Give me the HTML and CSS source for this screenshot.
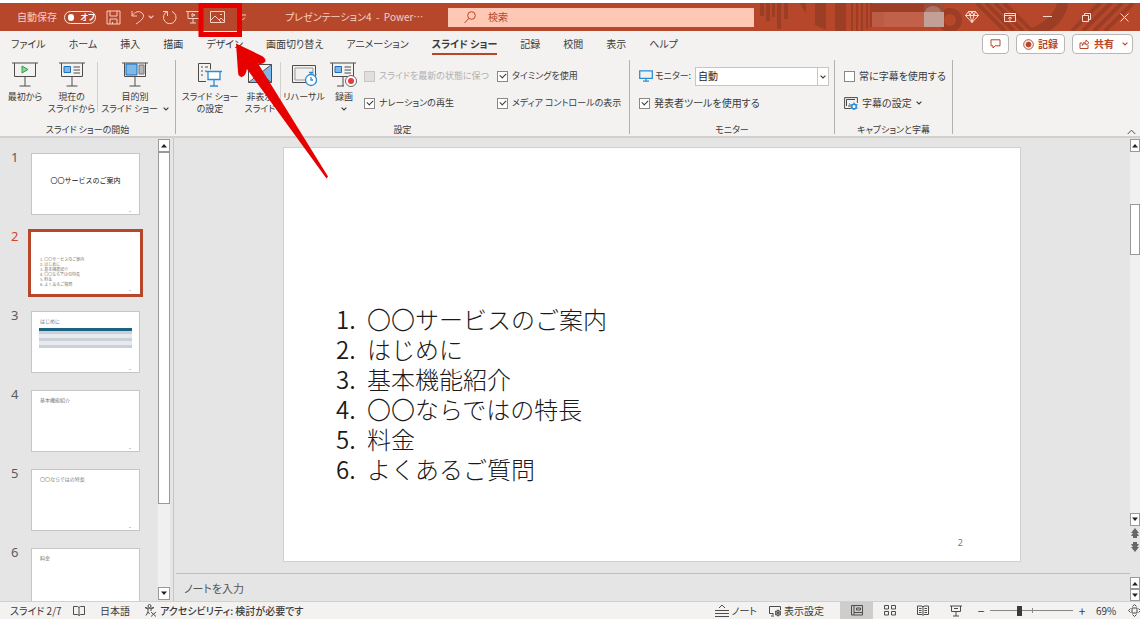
FILE: index.html
```html
<!DOCTYPE html>
<html lang="ja">
<head>
<meta charset="utf-8">
<title>プレゼンテーション4 - PowerPoint</title>
<link rel="stylesheet" href="styles.css">
</head>
<body>
<svg class="defs" width="0" height="0" aria-hidden="true">
  <symbol id="chev" viewBox="0 0 6 4"><path d="M.6.6 3 3 5.4.6" fill="none" stroke="currentColor" stroke-width="1.1"/></symbol>
  <symbol id="tri-up" viewBox="0 0 8 5"><path d="M1 4.500h6L4 1z" fill="currentColor"/></symbol>
  <symbol id="tri-down" viewBox="0 0 8 5"><path d="M1 .5h6L4 4z" fill="currentColor"/></symbol>
</svg>

<header class="titlebar">
  <svg class="pattern" viewBox="0 0 386 28" preserveAspectRatio="xMaxYMin slice" aria-hidden="true">
    <g fill="#9c3d26">
      <path d="M6 0h4v13H6zM12 0h4v18h-4zM18 0h3v14h-3zM23 0h4v26h-4zM30 0h4v16h-4zM46 0h6v11zM61 0h11v27l-11-5zM81 0h11v28H81zM97 0h2v28h-2zM102 0h2v28h-2zM107 0h2v28h-2zM112 0h2v26h-2zM116 0h2v24h-2z"/>
      <path d="M118 1h52v8h-52z"/>
    </g>
    <g fill="none" stroke="#9c3d26">
      <circle cx="196" cy="17" r="9" stroke-width="6"/>
      <path d="M223 0 251 28M232 0 260 28M241 0 269 28M250 0 278 28" stroke-width="4"/>
      <path d="M309-4Q308 18 280 30" stroke-width="11"/>
      <path d="M318 28 346 0M329 28 357 0M340 28 368 0M351 28 379 0" stroke-width="4"/>
    </g>
    <path fill="#bd5c45" d="M118 9h12v15h-12z"/><path fill="#c26149" d="M130 9h40v15h-40z"/><path fill="#9d4c38" d="M170 1h20v8h-20z"/><path fill="#c3a097" d="M170 9h20v15h-20z"/><path fill="#ab7162" d="M171 9a8 6 0 0 1 16 0z"/>
  </svg>
  <div class="quick">
    <label class="autosave">自動保存 <input type="checkbox" class="vh"><span class="toggle"><i></i>オフ</span></label>
    <button class="tb" aria-label="上書き保存"><svg width="15" height="15" viewBox="0 0 15 15"><path d="M1 1h13v13H1zM4 1v5h7V1M4 14V9h7v5M6.500 12v2"/></svg></button>
    <button class="tb" aria-label="元に戻す"><svg width="15" height="15" viewBox="0 0 15 15"><path d="M2 1v5h5M2 6C5 1.500 9 .5 12 3s2 6-6 11"/></svg></button>
    <svg class="c" width="6" height="4"><use href="#chev"/></svg>
    <button class="tb redo" aria-label="繰り返し"><svg width="15" height="15" viewBox="0 0 15 15"><path d="M1 1.500h4.500V6M5.500 1.500A6.300 6.300 0 1 0 10 1.500"/></svg></button>
    <button class="tb show" aria-label="最初から"><svg width="15" height="15" viewBox="0 0 15 15"><path d="M0 1.500h14M2 1.500v7h11M7 8.500V13M4 13h6M6 3.500v3l3-1.500z"/></svg></button>
    <button class="tb pic" aria-label="図"><svg width="15" height="13" viewBox="0 0 15 13"><path d="M.5.5h14v11H.5zM1 9l4-4 6 6M9 9l2-2 3 3M10 3.500h2"/></svg></button>
    <button class="tb cust" aria-label="クイック アクセス"><svg width="7" height="7" viewBox="0 0 7 7"><path d="M0 1h7M1 3.500 3.500 6 6 3.500"/></svg></button>
  </div>
  <div class="doc">プレゼンテーション4&nbsp; -&nbsp; Power⋯</div>
  <label class="search"><svg width="12" height="13" viewBox="0 0 12 13"><circle cx="7.500" cy="4.500" r="3.800"/><path d="M4.800 7.300.5 12"/></svg><input type="search" placeholder="検索" aria-label="検索"></label>
  <div class="wins">
    <button class="tb" aria-label="Premium"><svg width="14" height="12" viewBox="0 0 14 12"><path d="M3.500.5h7l3 4L7 11.500.5 4.500zM.5 4.500h13M3.500.5 5 4.500l2 7 2-7 1.500-4M5 4.500l2-4 2 4"/></svg></button>
    <button class="tb" aria-label="リボンの表示オプション"><svg width="12" height="9" viewBox="0 0 12 9"><path d="M.5.5h11v8H.5zM.5 2.500h11M6 8V4M4 5.500 6 4l2 1.500"/></svg></button>
    <button class="tb" aria-label="最小化"><svg width="10" height="9" viewBox="0 0 10 9"><path d="M0 3.500h9"/></svg></button>
    <button class="tb" aria-label="元に戻す (縮小)"><svg width="9" height="9" viewBox="0 0 9 9"><path d="M.5 2.500h6v6h-6zM2.500 2V.5h6v6H7"/></svg></button>
    <button class="tb" aria-label="閉じる"><svg width="9" height="9" viewBox="0 0 9 9"><path d="m.5.5 8 8M8.500.5l-8 8"/></svg></button>
  </div>
</header>

<nav class="tabs">
  <button>ファイル</button><button>ホーム</button><button>挿入</button><button>描画</button><button>デザイン</button><button>画面切り替え</button><button>アニメーション</button><button class="on">スライド ショー</button><button>記録</button><button>校閲</button><button>表示</button><button>ヘルプ</button>
  <div class="acts">
    <button class="act" aria-label="コメント"><svg width="13" height="10" viewBox="0 0 13 10"><path d="M2 .8h9v6H6L4 9V6.800H2z"/></svg></button>
    <button class="act"><svg width="11" height="11" viewBox="0 0 11 11"><circle cx="5.500" cy="5.500" r="4.800"/><circle class="f" cx="5.500" cy="5.500" r="2.500"/></svg>記録</button>
    <button class="act"><svg width="11" height="10" viewBox="0 0 11 10"><path d="M3 4H1v5.500h8V6M3 6.500Q3.500 3 7 2.800V1l3 2.700-3 2.500V4.500Q4.500 4.500 3 6.500"/></svg>共有<svg class="last" width="6" height="4"><use href="#chev"/></svg></button>
  </div>
</nav>

<section class="ribbon">
  <div class="group g1">
    <div class="tools">
      <button class="big"><svg width="26" height="25" viewBox="0 0 26 25"><path class="k" d="M0 1h26M2.500 1v13.500h21V1M13 14.500V24M7.500 24h11"/><path fill="#8fd19e" stroke="#2e9e4f" d="M10 4v7l6-3.500z"/></svg><span>最初から</span></button>
      <button class="big"><svg width="26" height="25" viewBox="0 0 26 25"><path class="k" d="M0 1h26M2.500 1v13.500h21V1M13 14.500V24M7.500 24h11M14.500 5H21M14.500 8H21M14.500 11H21"/><path fill="#7db8e8" stroke="#1d6fb8" d="M5 4.500h6.500v6H5z"/></svg><span>現在の</span><span>スライドから</span></button>
      <i class="sep"></i>
      <button class="big"><svg width="26" height="25" viewBox="0 0 26 25"><path fill="#7db8e8" stroke="#1d6fb8" d="M4 2h11v11H4z"/><path fill="#b5b5b5" stroke="#777" d="M17 3h5v9h-5z"/><path class="k" d="M0 1h26M2.500 1v13.500h21V1M13 14.500V24M7.500 24h11"/></svg><span>目的別</span><span>スライド ショー <svg width="6" height="4"><use href="#chev"/></svg></span></button>
    </div>
    <h2>スライド ショーの開始</h2>
  </div>
  <div class="group g2">
    <div class="tools">
      <button class="big"><svg width="26" height="25" viewBox="0 0 26 25"><path class="k" d="M9 19.500H1.500V1.500h12v6M4 5h2M8 5h3M4 9h2M4 13h2M8 9h1"/><path class="b" fill="#fff" d="M9 9.500h16M11 9.500v8h12v-8M17 17.500V24M13 24h8"/></svg><span>スライド ショー</span><span>の設定</span></button>
      <button class="big"><svg width="26" height="25" viewBox="0 0 26 25"><path fill="#7db8e8" d="M3 20 24 3v17z"/><path class="k" d="M1.500 2.500h23v18h-23zM1.500 20.500l23-18M1.500 2.500l23 18"/></svg><span>非表示</span><span>スライド</span></button>
      <i class="sep"></i>
      <button class="big"><svg width="26" height="25" viewBox="0 0 26 25"><path class="k" fill="#fff" d="M1.500 3.500h23v17h-23z"/><path stroke="#999" fill="none" d="M4 6h18v12H4z"/><circle class="b" fill="#fff" cx="20" cy="18" r="5.500"/><path class="b" fill="none" d="M20 12.500V11M18 10.500h4M20 15v3h2M24 13l1.500-1"/></svg><span>リハーサル</span></button>
      <button class="big"><svg width="28" height="25" viewBox="0 0 28 25"><path class="k" d="M0 1h26M2.500 1v13.500h21V1M13 14.500V24M7 24h7M14.500 5H21M14.500 8H21M14.500 11H21"/><path fill="#7db8e8" stroke="#1d6fb8" d="M5 4.500h6.500v6H5z"/><circle cx="21" cy="19" r="5.500" fill="#fff" stroke="#666"/><circle cx="21" cy="19" r="3" fill="#e8383d"/></svg><span>録画</span><span class="dd"><svg width="6" height="4"><use href="#chev"/></svg></span></button>
      <div class="checks">
        <label class="off"><input type="checkbox" disabled>スライドを最新の状態に保つ</label>
        <label><input type="checkbox" checked>タイミングを使用</label>
        <label><input type="checkbox" checked>ナレーションの再生</label>
        <label><input type="checkbox" checked>メディア コントロールの表示</label>
      </div>
    </div>
    <h2>設定</h2>
  </div>
  <div class="group g3">
    <div class="rows">
      <div class="row"><svg width="14" height="12" viewBox="0 0 14 12"><path class="b" fill="none" d="M.7.8h12.600v7.500H.7zM7 8.500V11M4 11.200h6"/></svg><label for="mon">モニター:</label><span class="sel"><select id="mon"><option>自動</option></select><svg width="6" height="4"><use href="#chev"/></svg></span></div>
      <label class="row"><input type="checkbox" checked>発表者ツールを使用する</label>
    </div>
    <h2>モニター</h2>
  </div>
  <div class="group g4">
    <div class="rows">
      <label class="row"><input type="checkbox">常に字幕を使用する</label>
      <button class="row"><svg width="14" height="13" viewBox="0 0 14 13"><path class="k" d="M7 11.500H.6V.6h12.800V6M2.500 2.500H11M2.500 2.500v6.500M4 9h3M5 7h1"/><circle cx="10" cy="9.500" r="2.300" fill="#fff" stroke="#2a8dd4" stroke-width="1.600"/><path class="b" d="M10 5.500v8M6.500 7.500l7 4M13.500 7.500l-7 4" stroke-dasharray="1.500 5"/></svg>字幕の設定<svg width="6" height="4"><use href="#chev"/></svg></button>
    </div>
    <h2>キャプションと字幕</h2>
  </div>
  <button class="fold" aria-label="リボンを折りたたむ"><svg width="9" height="6" viewBox="0 0 9 6"><path class="k" d="M.7 5 4.500 1.200 8.300 5"/></svg></button>
</section>

<main>
  <aside>
    <ol class="thumbs">
      <li><button class="thumb t1"><b>〇〇サービスのご案内</b></button></li>
      <li class="cur"><button class="thumb t2"><span>1. 〇〇サービスのご案内<br>2. はじめに<br>3. 基本機能紹介<br>4. 〇〇ならではの特長<br>5. 料金<br>6. よくあるご質問</span></button></li>
      <li><button class="thumb"><span>はじめに</span><i class="tbl"></i></button></li>
      <li><button class="thumb"><span>基本機能紹介</span></button></li>
      <li><button class="thumb"><span>〇〇ならではの特長</span></button></li>
      <li><button class="thumb"><span>料金</span></button></li>
    </ol>
    <div class="sb">
      <button aria-label="上へ"><svg width="8" height="5"><use href="#tri-up"/></svg></button>
      <div class="track"><i class="grip long"></i></div>
      <button aria-label="下へ"><svg width="8" height="5"><use href="#tri-down"/></svg></button>
    </div>
  </aside>
  <div class="editor">
    <div class="stage">
      <article class="slide">
        <ol>
          <li>〇〇サービスのご案内</li>
          <li>はじめに</li>
          <li>基本機能紹介</li>
          <li>〇〇ならではの特長</li>
          <li>料金</li>
          <li>よくあるご質問</li>
        </ol>
        <span class="num">2</span>
      </article>
    </div>
    <div class="sb">
      <button aria-label="上へ"><svg width="8" height="5"><use href="#tri-up"/></svg></button>
      <div class="track"><i class="grip short"></i></div>
      <button aria-label="下へ"><svg width="8" height="5"><use href="#tri-down"/></svg></button>
      <button class="page" aria-label="前のスライド"><svg width="8" height="10" viewBox="0 0 8 10"><path d="M4 0 8 5H6l2 3H6v2H2V8H0l2-3H0z"/></svg></button>
      <button class="page" aria-label="次のスライド"><svg width="8" height="10" viewBox="0 0 8 10"><path d="M4 10 8 5H6l2-3H6V0H2v2H0l2 3H0z"/></svg></button>
    </div>
    <div class="notes">ノートを入力</div>
    <div class="sb nsb">
      <button aria-label="上へ"><svg width="8" height="5"><use href="#tri-up"/></svg></button>
      <button aria-label="下へ"><svg width="8" height="5"><use href="#tri-down"/></svg></button>
    </div>
  </div>
</main>

<footer>
  <span class="pos">スライド 2/7</span>
  <button class="st" aria-label="校正"><svg width="12" height="12" viewBox="0 0 12 12"><path class="k" d="M6 10.500 4.500 9.500H.5v-8h4L6 2.500l1.500-1h4v8h-4zM6 2.500v8"/></svg></button>
  <span class="lang">日本語</span>
  <button class="st acc"><svg width="13" height="13" viewBox="0 0 13 13"><circle class="k" cx="5.500" cy="2" r="1.500"/><path class="k" d="M1 3.500 4 5v3l-2 3.500M10 3.500 7 5v2M1 3.500q4.500 2 9 0M4 8l1.500 2M7 8l5 4.500M12 8l-5 4.500"/></svg>アクセシビリティ: 検討が必要です</button>
  <div class="right">
    <button class="st"><svg width="14" height="13" viewBox="0 0 14 13"><path class="k" d="M0 6.500h14M0 9.500h14M0 12.500h14M4 4l3-3 3 3"/></svg>ノート</button>
    <button class="st disp"><svg width="13" height="12" viewBox="0 0 13 12"><path class="k" d="M5 9H3M4 8.500H.5v-7h11V5M2 11h3"/><circle class="k" cx="9" cy="8" r="2.500"/><path class="k" d="M9 4.500v7M6 6l6 4M12 6l-6 4"/></svg>表示設定</button>
    <button class="view on" aria-label="標準"><svg width="12" height="11" viewBox="0 0 12 11"><path class="k" d="M.5.5h11v9.500H.5zM3 .5V10M3 7.500h8M5.500 3h4v2h-4z"/></svg></button>
    <button class="view" aria-label="スライド一覧"><svg width="12" height="11" viewBox="0 0 12 11"><path class="k" d="M.5.500h4v3.500h-4zM7.500.5h4V4h-4zM.5 6.500h4V10h-4zM7.500 6.500h4V10h-4z"/></svg></button>
    <button class="view" aria-label="閲覧表示"><svg width="12" height="11" viewBox="0 0 12 11"><path class="k" d="M.5 1H5l1 1 1-1h4.500v8.500H7l-1 1-1-1H.5zM6 2v8M2 3.500h2.500M2 5.500h2.500M2 7.500h2.500M7.500 3.500H10M7.500 5.500H10M7.500 7.500H10"/></svg></button>
    <button class="view" aria-label="スライド ショー"><svg width="12" height="12" viewBox="0 0 12 12"><path class="k" d="M0 1h12M1.500 1v5.500h9V1M6 6.500V11M3 11h6M4 3.500h4"/></svg></button>
    <button class="pm" aria-label="縮小">−</button>
    <input type="range" min="0" max="100" value="34" aria-label="ズーム">
    <button class="pm" aria-label="拡大">+</button>
    <span class="pct">69%</span>
    <button class="st" aria-label="ウィンドウに合わせる"><svg width="13" height="13" viewBox="0 0 13 13"><path class="k" d="M4 4h5v5H4zM4.500 2.500l2-2 2 2M4.500 10.500l2 2 2-2M2.500 4.500l-2 2 2 2M10.500 4.500l2 2-2 2"/></svg></button>
  </div>
</footer>

<svg class="mark" width="332" height="182" viewBox="0 0 332 182" aria-hidden="true">
  <path d="M201 5.500h38.500v29H201z" fill="none" stroke="#e60000" stroke-width="5"/>
  <path d="M236 43.500 262 56Q267 59 265 62 262 65 258 63.500L328 176.500 326.500 178.500 247 69 245.500 74Q243 78 240 76.500 238 75.500 238 72Z" fill="#e60000"/>
</svg>
</body>
</html>
```
FILE: styles.css
```css
* { box-sizing: border-box; }
body {
  margin: 0;
  height: 100vh;
  display: flex;
  flex-direction: column;
  overflow: hidden;
  position: relative;
  font: 10px/14px "Noto Sans CJK JP", "Noto Sans", sans-serif;
  font-feature-settings: "palt";
  color: #3b3a39;
  background: #f3f2f1;
}
button, input, select { font: inherit; font-feature-settings: inherit; color: inherit; }
button { background: none; border: 0; padding: 0; white-space: nowrap; }
svg { display: block; flex: none; }
h2 { margin: 0; font-size: 9px; font-weight: 400; text-align: center; }
ol { margin: 0; padding: 0; list-style: none; }
.defs { position: absolute; }
.vh { position: absolute; opacity: 0; width: 1px; height: 1px; }
.k { fill: none; stroke: #4d4c4b; }
.b { stroke: #2a8dd4; stroke-width: 1.3; }

/* title bar */
.titlebar {
  flex: none;
  position: relative;
  display: flex;
  align-items: center;
  height: 31px;
  padding-left: 17px;
  border-top: 3px solid #fff;
  background: #b7472a;
  color: #f6cfc3;
}
.pattern { position: absolute; right: 0; top: 0; width: 386px; height: 28px; }
.tb svg, .search svg { fill: none; stroke: currentColor; stroke-width: 1; }
.quick { display: flex; align-items: center; width: 268px; flex: none; }
.autosave { display: flex; align-items: center; justify-content: space-between; width: 79px; margin-right: 10px; white-space: nowrap; }
.toggle {
  display: flex; align-items: center; gap: 6px;
  height: 13px; width: 32px; padding-left: 3px;
  border: 1px solid #fbe3dc; border-radius: 7px;
  font-size: 8px; font-weight: 700; color: #fff;
}
.toggle i { width: 7px; height: 7px; border-radius: 50%; background: #fff; }
.quick .tb { margin-right: 9px; }
.quick .c { margin: 0 8px 0 -6px; }
.quick .pic { margin-right: 14px; }
.doc { width: 163px; flex: none; white-space: nowrap; }
.search {
  flex: 0 1 306px;
  display: flex; align-items: center; gap: 12px;
  height: 19px; padding-left: 16px;
  background: #fec8b5; color: #b7472a;
}
.search input { border: 0; background: none; outline: 0; min-width: 0; flex: 1; padding: 0; appearance: none; }
.search input::placeholder { color: #b7472a; opacity: 1; }
.wins { position: relative; margin-left: auto; display: grid; grid-template-columns: repeat(5, 38px); justify-items: center; margin-right: -3px; color: #fbdcd2; }
.wins .tb { display: grid; place-items: center; }

/* tabs */
.tabs { flex: none; display: flex; align-items: center; gap: 23px; height: 29px; padding: 0 7px 1px 11px; }
.tabs > button { height: 20px; border-bottom: 2px solid transparent; }
.tabs > .on { border-color: #b7472a; font-weight: 700; }
.acts { margin-left: auto; display: flex; gap: 7px; padding-bottom: 2px; }
.act {
  display: flex; align-items: center; gap: 4px; height: 20px; padding: 0 6px;
  background: #fff; border: 1px solid #b9b7b5; border-radius: 4px;
  color: #b7472a; font-weight: 700;
}
.act svg { fill: none; stroke: #b7472a; }
.act .f { fill: #b7472a; }
.act .last { margin: 0 -2px 0 4px; }

/* ribbon */
.ribbon {
  flex: none; position: relative;
  display: grid; grid-template-columns: 176px 454px 205px 118px 1fr;
  height: 78px; border-bottom: 2px solid #d2d0ce;
  font-size: 9px;
}
.group { display: flex; flex-direction: column; height: 74px; border-right: 1px solid #b3b0ad; }
.tools { flex: 1; display: flex; align-items: flex-start; padding-top: 2px; }
.group h2 { height: 13px; line-height: 13px; margin-bottom: -2px; }
.big { display: flex; flex-direction: column; align-items: center; line-height: 12px; flex: none; }
.big > svg { margin-bottom: 4px; }
.big span { display: flex; align-items: center; gap: 3px; white-space: pre; }
.big .dd { height: 12px; }
.sep { width: 1px; height: 50px; background: #d2d0ce; }
.g1 .tools { display: grid; grid-template-columns: 42px 47px 1px 1fr; column-gap: 2px; padding: 2px 5px 0 4px; }
.g2 .tools { display: grid; grid-template-columns: 60px 36px 1px 42px 34px 1fr; column-gap: 2px; padding-left: 4px; }
.checks { display: grid; grid-template-columns: 133px 1fr; row-gap: 13px; padding: 7px 0 0 1px; }
.checks label, .row { display: flex; align-items: center; gap: 4px; white-space: nowrap; }
.off { color: #b1afad; }
input[type="checkbox"]:not(.vh) {
  appearance: none; flex: none; position: relative;
  width: 11px; height: 11px; margin: 0;
  background: #fff; border: 1px solid #8a8886;
}
.off input[type="checkbox"]:not(.vh) { background: #e1dfdd; border-color: #c8c6c4; }
input[type="checkbox"]:checked::after {
  content: ""; position: absolute; left: 2px; top: 1px; width: 5px; height: 3px;
  border: solid #3b3a39; border-width: 0 0 1px 1px; transform: rotate(-45deg);
}
.rows { flex: 1; display: flex; flex-direction: column; gap: 7px; padding: 6px 5px 0 9px; }
.row { height: 20px; }
.rows .row { font-size: 10px; }
.g3 .row:first-child { gap: 2px; font-size: 9px; }
.sel { position: relative; flex: 1; margin-left: 2px; font-size: 10px; }
.sel select {
  display: block; width: 100%; height: 19px; padding: 0 2px; appearance: none;
  background: #fff; border: 1px solid #c8c6c4; border-radius: 0; color: #201f1e;
}
.sel::after { content: ""; position: absolute; right: 11px; top: 0; width: 1px; height: 19px; background: #c8c6c4; }
.sel svg { position: absolute; right: 3px; top: 8px; }
.fold { align-self: end; justify-self: end; padding: 0 4px 1px; }

/* workspace */
main { flex: 1; min-height: 0; display: flex; background: #e5e5e5; }
aside { flex: none; display: flex; width: 174px; border-right: 1px solid #c6c6c6; }
.thumbs { flex: 1; overflow: hidden; display: flex; flex-direction: column; gap: 17px; padding: 15px 0 0 11px; counter-reset: s; }
.thumbs li { flex: none; display: flex; counter-increment: s; font: 13px/14px "Noto Sans", sans-serif; color: #5c5b5a; }
.thumbs li::before { content: counter(s); width: 20px; line-height: 9px; }
.thumbs .cur { color: #d24726; }
.thumb {
  position: relative; width: 109px; height: 62px; padding: 6px 8px; text-align: left;
  display: flex; flex-direction: column; background: #fff; border: 1px solid #c6c6c6;
  font: 5px/6px "Noto Sans CJK JP", sans-serif; color: #777;
}
.thumb::after { content: ""; position: absolute; right: 8px; bottom: 2px; width: 2px; height: 1px; background: #ccc; }
.cur .thumb { border-color: #fff; box-shadow: 0 0 0 3px #b7472a; }
.t1 { align-items: center; padding-top: 22px; }
.t1 b { font-size: 7px; line-height: 8px; font-weight: 400; color: #111; }
.t2 { padding-top: 24px; }
.t2 span { font-size: 4px; line-height: 5px; }
.tbl {
  height: 20px; margin: 4px 0 0 -1px; width: 93px;
  background: linear-gradient(#1b6282 3px, #cbd0d8 3px 6px, #e7eaee 6px 10px, #cbd0d8 10px 13px, #e7eaee 13px 17px, #cbd0d8 17px);
}
.sb { width: 12px; flex: none; display: flex; flex-direction: column; background: #f0f0f0; color: #222; }
.sb button { display: grid; place-items: center; height: 13px; flex: none; background: #fff; border: 1px solid #999; }
aside .sb { margin: 1px 3px 1px 0; }
.track { flex: 1; position: relative; display: flex; flex-direction: column; }
.grip { background: #fff; border: 1px solid #999; }
.long { height: 81%; }
.short { height: 51px; margin-top: 52px; }
.editor { flex: 1; min-width: 0; display: grid; grid-template: 1fr 28px / 1fr 10px; }
.editor .sb { width: 10px; margin-top: 1px; }
.editor .sb .page { border: 0; background: #e5e5e5; fill: #666; height: 14px; }
.editor > .sb:not(.nsb) { padding-bottom: 19px; background: linear-gradient(#f0f0f0 90%, #e5e5e5 90%); }
.stage { min-height: 0; display: flex; justify-content: center; align-items: flex-start; padding-top: 9px; }
.slide {
  display: flex; flex-direction: column; justify-content: space-between;
  width: 77.2%; aspect-ratio: 16 / 9; padding: 156px 57px 12px 52px;
  background: #fff; border: 1px solid #d0d0d0; color: #1a1a1a;
}
.slide ol { counter-reset: n; font-size: 24px; line-height: 30px; font-weight: 300; font-feature-settings: normal; }
.slide li { counter-increment: n; display: flex; }
.slide li::before { content: counter(n) "."; width: 31px; font-weight: 350; }
.num { align-self: flex-end; font: 9px/12px "Noto Sans", sans-serif; color: #777; }
.notes { display: flex; align-items: center; margin-left: 2px; padding-left: 8px; border-top: 1px solid #bdbdbd; font-size: 11px; color: #555; }
.editor .nsb { margin-top: 4px; }
.nsb button { height: 12px; }

/* status bar */
footer { flex: none; display: flex; align-items: center; height: 18px; padding-left: 10px; border-top: 1px solid #d2d0ce; white-space: nowrap; }
.pos { width: 63px; }
.st { display: flex; align-items: center; gap: 3px; }
.lang { margin: 0 14px 0 15px; }
.acc { font-weight: 500; }
.right { margin-left: auto; display: flex; align-items: center; height: 100%; margin-right: -1px; }
.disp { margin: 0 16px 0 12px; gap: 2px; }
.view { display: grid; place-items: center; width: 33px; height: 100%; }
.view.on { background: #cfcdcb; }
.pm { width: 10px; margin-left: 4px; font-size: 12px; }
.pm + .pct { margin: 0 10px 0 9px; width: 22px; }
input[type="range"] {
  appearance: none; width: 83px; height: 12px; margin: 0 0 0 4px;
  background: linear-gradient(#888, #888) 42px 50% / 1px 5px no-repeat, linear-gradient(#888, #888) 0 50% / 100% 1px no-repeat;
}
input[type="range"]::-webkit-slider-thumb { appearance: none; width: 5px; height: 10px; background: #3b3a39; }

/* highlight over the toolbar */
.mark { position: absolute; left: 0; top: 0; pointer-events: none; }
```
